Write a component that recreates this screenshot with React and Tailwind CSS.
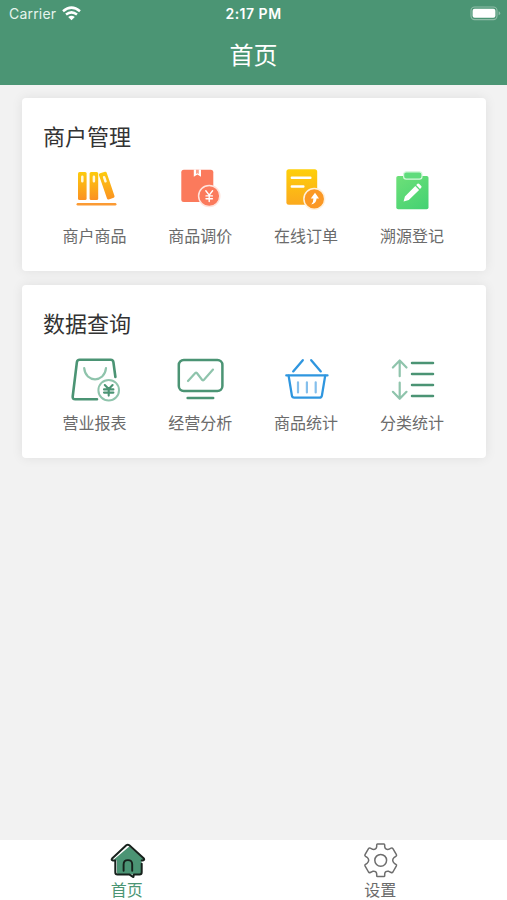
import React from 'react';

const GREEN = '#4b9474';
const PALE_GREEN = '#8fc4ac';

function Icon({ viewBox = '0 0 52 46', children }) {
    return (
        <svg className="w-[52px] h-[46px] overflow-visible" viewBox={viewBox} fill="none">
            {children}
        </svg>
    );
}

// Outline icons sit a little lower in their cell than the filled ones
function LineIcon({ children }) {
    return <Icon viewBox="0 -3 52 46">{children}</Icon>;
}

function BooksIcon() {
    return (
        <Icon>
            <defs>
                <linearGradient id="books" x1="0" y1="6" x2="0" y2="34" gradientUnits="userSpaceOnUse">
                    <stop stopColor="#fdcb0d" />
                    <stop offset="1" stopColor="#fb9122" />
                </linearGradient>
            </defs>
            <rect x="9" y="6" width="8.6" height="28" rx="1.5" fill="url(#books)" />
            <rect x="20.6" y="6" width="8.6" height="28" rx="1.5" fill="url(#books)" />
            <path d="M31 7.2l5-1.5q1.3-.3 1.7 1l7.8 23.4q.3 1.2-.8 1.6l-5 1.8q-1.3.4-1.7-.9L29.9 8.9q-.3-1.2 1.1-1.7z" fill="url(#books)" />
            <path d="M13.3 10.7v4.6M24.9 10.7v4.6M35.1 11.2l1.4 4.1" stroke="#fff8dc" strokeWidth="2.5" strokeLinecap="round" />
            <path d="M8.8 38.2h37.4" stroke="#fb9a33" strokeWidth="2.5" strokeLinecap="round" />
        </Icon>
    );
}

function PriceIcon() {
    return (
        <Icon>
            <rect x="7.3" y="3.7" width="32" height="32.4" rx="2.5" fill="#fb7a5c" />
            <path d="M19.8 3.4h7.2v7.4l-3.6-2.3-3.6 2.3z" fill="#fff" />
            <path d="M22 3.7h2.8v4.4l-1.4-.9-1.4.9z" fill="#fba08a" />
            <circle cx="35.2" cy="30" r="10.6" fill="#fb7a5c" stroke="#ffe3dc" strokeWidth="1.5" />
            <path d="M31.8 24.8l3.4 4.4 3.4-4.4M35.2 29v6.6M32 29.9h6.4M32 32.7h6.4" stroke="#fff" strokeWidth="1.4" strokeLinecap="round" />
        </Icon>
    );
}

function OrderIcon() {
    return (
        <Icon>
            <defs>
                <linearGradient id="order" x1="0" y1="3" x2="0" y2="38" gradientUnits="userSpaceOnUse">
                    <stop stopColor="#fed00a" />
                    <stop offset="1" stopColor="#fbaa1d" />
                </linearGradient>
            </defs>
            <rect x="6.4" y="3.3" width="30.8" height="35.4" rx="2.5" fill="url(#order)" />
            <path d="M11.8 11.8h18.6M11.8 20.5h11.6" stroke="#fff" strokeWidth="2.4" strokeLinecap="round" />
            <circle cx="34.3" cy="32.9" r="10.4" fill="#fb9824" stroke="#fff1dc" strokeWidth="1.5" />
            <path d="M35 26.8l4 5.8h-2.4q-.4 4.8-5.4 6 2.4-2.7 2.2-6h-2.6z" fill="#fff" />
        </Icon>
    );
}

function RegisterIcon() {
    return (
        <Icon>
            <defs>
                <linearGradient id="register" x1="14" y1="8" x2="38" y2="43" gradientUnits="userSpaceOnUse">
                    <stop stopColor="#6de078" />
                    <stop offset="1" stopColor="#46d273" />
                </linearGradient>
            </defs>
            <rect x="10.3" y="10" width="32.2" height="33.2" rx="1.8" fill="url(#register)" />
            <rect x="17.6" y="5.8" width="18.4" height="7.4" rx="2.6" fill="#5fdc7c" stroke="#d6f8dc" strokeWidth="1.2" />
            <path d="M17.6 35.6l1.3-5.2L29.3 20l3.8 3.9-10.3 10.2zM30.2 19l1.3-1.2q.9-.7 1.8.2l1.9 2q.8.9 0 1.7L34 22.9z" fill="#fff" />
        </Icon>
    );
}

function ReportIcon() {
    return (
        <LineIcon>
            <path d="M28 43.3H6.2q-2.8 0-2.5-2.8L7.9 6.2Q8.2 3.7 10.7 3.7h31q2.4 0 2.7 2.5l2 14.8" stroke={GREEN} strokeWidth="2.6" strokeLinecap="round" />
            <path d="M15.2 12.2c1.2 14.8 20.4 14.8 21.8 0" stroke={PALE_GREEN} strokeWidth="2.2" strokeLinecap="round" />
            <circle cx="39.7" cy="34.2" r="10.3" stroke={PALE_GREEN} strokeWidth="2" />
            <path d="M35.8 29l3.9 4 3.9-4M39.7 33v6.6M35 33.4h9.4M35 36.6h9.4" stroke={GREEN} strokeWidth="2.1" strokeLinecap="round" />
        </LineIcon>
    );
}

function AnalysisIcon() {
    return (
        <LineIcon>
            <rect x="4.8" y="4" width="43.6" height="31" rx="5" stroke={GREEN} strokeWidth="2.5" />
            <path d="M14 25l7.3-8q.8-.8 1.6 0l5.3 6.9q.8.8 1.6.1l9.2-10.4" stroke={PALE_GREEN} strokeWidth="2.2" strokeLinecap="round" />
            <path d="M13.6 42.1h25.6" stroke={GREEN} strokeWidth="2.5" strokeLinecap="round" />
        </LineIcon>
    );
}

function BasketIcon() {
    return (
        <LineIcon>
            <g stroke="#2f96df" strokeWidth="2.3" strokeLinecap="round" strokeLinejoin="round">
                <path d="M22.8 4.2L13.2 15.4M31.2 4.2l9.6 11.2M6.3 19.4h41.2" />
                <path d="M8.6 19.6l3.3 20q.3 2.1 2.4 2.1h25.2q2.1 0 2.4-2.1l3.3-20" />
            </g>
            <path d="M18 26.3v10.2M26.9 26.3v10.2M35.7 26.3v10.2" stroke="#84bfec" strokeWidth="2.2" strokeLinecap="round" />
        </LineIcon>
    );
}

function SortIcon() {
    return (
        <LineIcon>
            <path d="M13.7 4.6v15.6M6.9 11.5l6.8-7 6.8 7M13.7 26.6v15.8M6.9 35.8l6.8 7 6.8-7" stroke={PALE_GREEN} strokeWidth="2.2" strokeLinecap="round" strokeLinejoin="round" />
            <path d="M26 7.1h21M26 18h21M26 29h21M26 40h21" stroke={GREEN} strokeWidth="2.5" strokeLinecap="round" />
        </LineIcon>
    );
}

function HomeIcon() {
    return (
        <svg className="w-[38px] h-[38px]" viewBox="-0.7 0.8 38 38" fill="none">
            <path d="M20.6 5.2L36 18.6l-3.2 1V31q0 2.2-2.2 2.2H10.4q-2.2 0-2.2-2.2V19.4l-3-1z" fill={GREEN} />
            <path
                d="M33 22.5V31q0 2.2-2.2 2.2h-5.6l-.5 2.7-4.2-2.7H8.8q-2.2 0-2.2-2.2V19.2H3.9q-1.6-.6-.5-1.8L17.6 4.1q1.5-1.2 3 0l14.6 13.1q.8 1.4-.7 2H33"
                stroke="#17211c"
                strokeWidth="2"
                strokeLinecap="round"
                strokeLinejoin="round"
            />
            <path d="M14.9 29.6v-6.3q0-4.4 4.3-4.4t4.3 4.4v6.3" stroke="#17211c" strokeWidth="1.9" strokeLinecap="round" />
        </svg>
    );
}

function GearIcon() {
    return (
        <svg className="w-[38px] h-[38px]" viewBox="-19.7 -18.3 38 38" fill="none" stroke="#6d6d6d" strokeWidth="1.5" strokeLinejoin="round">
            <path d="M-3.2-16.3H3.2Q4-16.3 4-15.4V-13.6Q4.4-10.4 8-11L10.4-12.2Q11.6-12.6 12.2-11.7L15.7-5.6Q16.2-4.6 15.2-4L13.6-3Q10.4 0 13.6 3L15.2 4Q16.2 4.6 15.7 5.6L12.2 11.7Q11.6 12.6 10.4 12.2L8 11Q4.4 10.4 4 13.6V15.4Q4 16.3 3.2 16.3H-3.2Q-4 16.3-4 15.4V13.6Q-4.4 10.4-8 11L-10.4 12.2Q-11.6 12.6-12.2 11.7L-15.7 5.6Q-16.2 4.6-15.2 4L-13.6 3Q-10.4 0-13.6-3L-15.2-4Q-16.2-4.6-15.7-5.6L-12.2-11.7Q-11.6-12.6-10.4-12.2L-8-11Q-4.4-10.4-4-13.6V-15.4Q-4-16.3-3.2-16.3Z" />
            <circle r="5.9" />
        </svg>
    );
}

const SECTIONS = [
    {
        title: '商户管理',
        items: [
            { label: '商户商品', icon: BooksIcon },
            { label: '商品调价', icon: PriceIcon },
            { label: '在线订单', icon: OrderIcon },
            { label: '溯源登记', icon: RegisterIcon },
        ],
    },
    {
        title: '数据查询',
        items: [
            { label: '营业报表', icon: ReportIcon },
            { label: '经营分析', icon: AnalysisIcon },
            { label: '商品统计', icon: BasketIcon },
            { label: '分类统计', icon: SortIcon },
        ],
    },
];

function StatusBar() {
    return (
        <div className="grid grid-cols-3 items-center h-[27px] pl-[9px] pr-[6px] text-[14px] leading-none">
            <div className="flex items-center gap-[6px] text-[#e6f4ed]">
                <span className="tracking-[0.2px]">Carrier</span>
                <svg className="w-[19px] h-[15px]" viewBox="0 0 19 15" fill="none" stroke="#fff" strokeWidth="2.5">
                    <path d="M1 5.2q8.5-7.2 17 0M4 8.6q5.5-4.4 11 0" />
                    <path d="M6.2 11q3.3-2.5 6.6 0l-3.3 3.3z" fill="#fff" stroke="none" />
                </svg>
            </div>
            <span className="pt-px pr-[3px] text-center text-[14px] tracking-[0.5px] font-semibold whitespace-nowrap">2:17 PM</span>
            <svg className="w-[31px] h-[15px] justify-self-end" viewBox="0 0 31 15" fill="none">
                <rect x="1" y="1" width="26" height="12.6" rx="3.6" stroke="#8fbda8" strokeWidth="1.1" />
                <rect x="2.6" y="2.8" width="22.8" height="9" rx="2" fill="#fff" />
                <path d="M28.6 5.3q1.6.5 1.6 2t-1.6 2z" fill="#8fbda8" />
            </svg>
        </div>
    );
}

function Card({ title, items }) {
    return (
        <section className="h-[173px] rounded-[4px] bg-white px-[20px] pt-[23px] shadow-[0_0_12px_rgba(0,0,0,0.08)]">
            <h2 className="pl-px text-[22px] leading-[32px] text-[#333]">{title}</h2>
            <div className="grid grid-cols-4 mt-[13px] mr-[1.2px] -ml-[0.4px]">
                {items.map(({ label, icon: ItemIcon }) => (
                    <div key={label} className="flex flex-col items-center">
                        <ItemIcon />
                        <span className="mt-[12px] text-[16px] leading-[24px] text-[#6b6b6b]">{label}</span>
                    </div>
                ))}
            </div>
        </section>
    );
}

export default function App() {
    return (
        <div className="flex flex-col w-full h-screen overflow-hidden bg-[#f2f2f2] font-['Inter','Noto_Sans_CJK_SC',sans-serif]">
            <header className="h-[85px] shrink-0 bg-[#4b9574] text-white">
                <StatusBar />
                <h1 className="text-center text-[24px] leading-[58px]">首页</h1>
            </header>

            <main className="flex-1 flex flex-col gap-[14px] pt-[13px] pl-[22px] pr-[21px]">
                {SECTIONS.map((section) => (
                    <Card key={section.title} {...section} />
                ))}
            </main>

            <nav className="grid grid-cols-2 h-[60px] shrink-0 bg-white text-[16px] leading-[20px]">
                <div className="flex flex-col items-center pt-[2px] text-[#4b9574]">
                    <HomeIcon />
                    <span>首页</span>
                </div>
                <div className="flex flex-col items-center pt-[2px] text-[#6b6b6b]">
                    <GearIcon />
                    <span>设置</span>
                </div>
            </nav>
        </div>
    );
}
